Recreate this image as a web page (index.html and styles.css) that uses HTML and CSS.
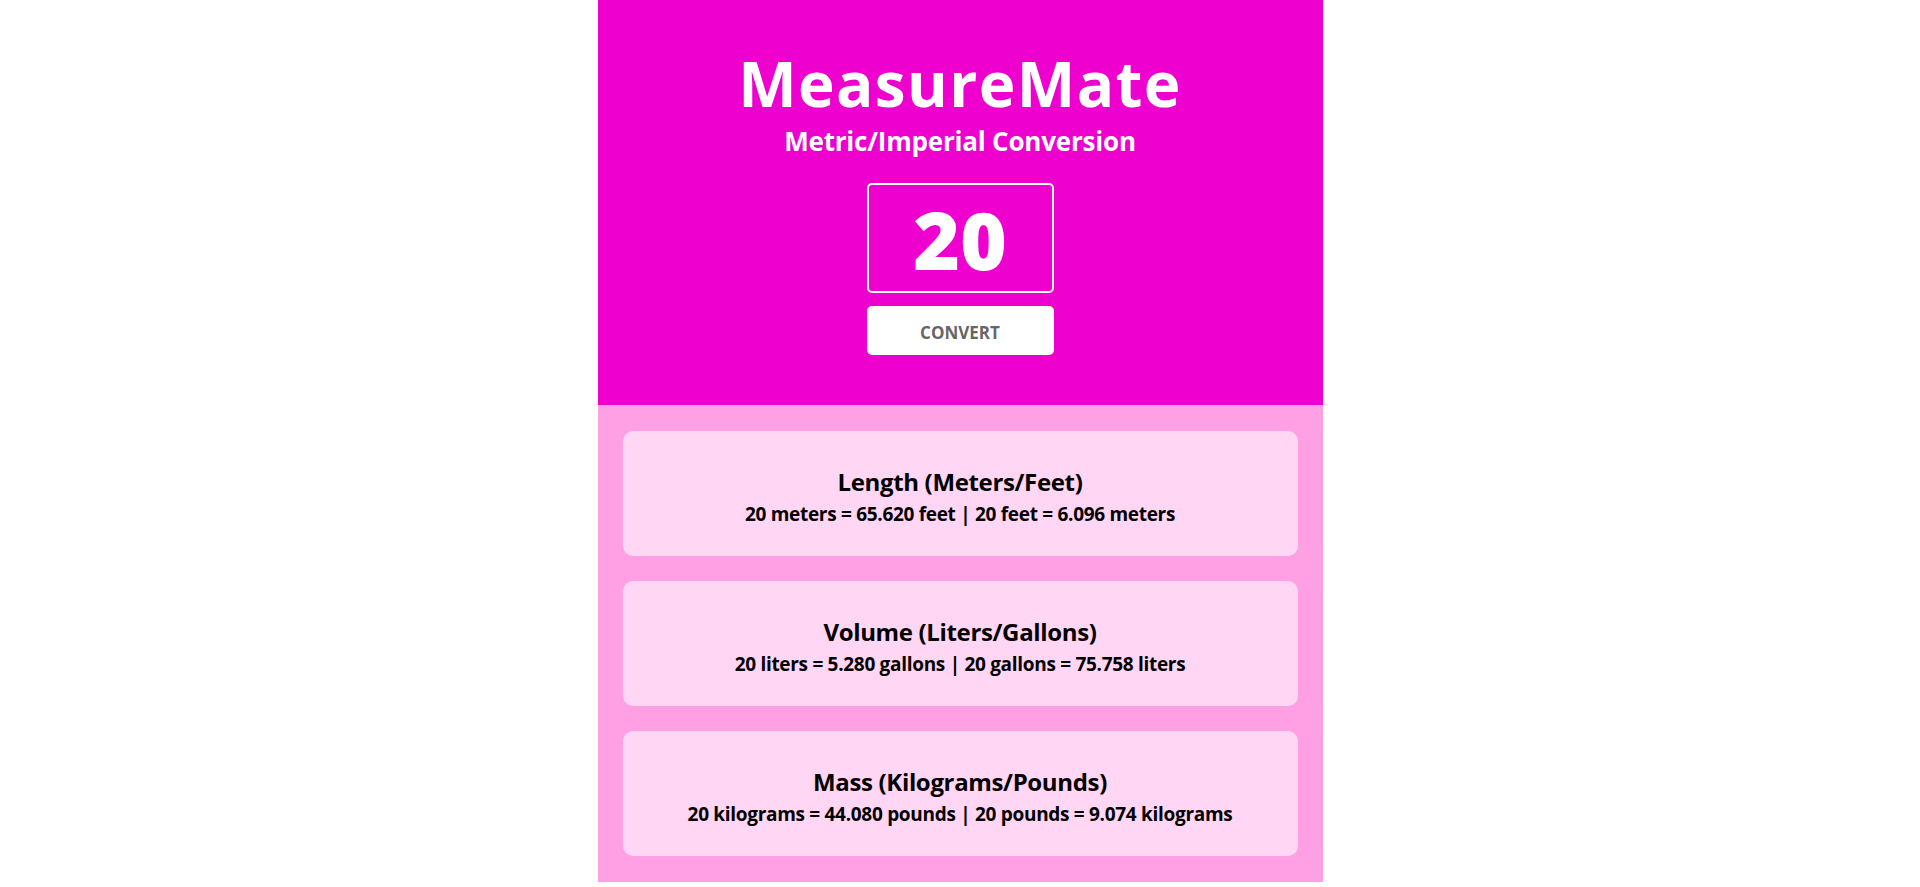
FILE: index.html
```html
<!DOCTYPE html>
<html lang="en">
<head>
<meta charset="utf-8">
<title>MeasureMate</title>
<link rel="stylesheet" href="styles.css">
</head>
<body>
<main class="app">
  <header class="hero">
    <h1 class="title">MeasureMate</h1>
    <h2 class="subtitle">Metric/Imperial Conversion</h2>
    <div class="value-box">20</div>
    <button class="convert-btn" type="button">CONVERT</button>
  </header>
  <section class="results">
    <div class="card">
      <h3 class="card-title">Length (Meters/Feet)</h3>
      <p class="card-text">20 meters = 65.620 feet | 20 feet = 6.096 meters</p>
    </div>
    <div class="card">
      <h3 class="card-title">Volume (Liters/Gallons)</h3>
      <p class="card-text">20 liters = 5.280 gallons | 20 gallons = 75.758 liters</p>
    </div>
    <div class="card">
      <h3 class="card-title">Mass (Kilograms/Pounds)</h3>
      <p class="card-text">20 kilograms = 44.080 pounds | 20 pounds = 9.074 kilograms</p>
    </div>
  </section>
</main>
</body>
</html>
```

FILE: styles.css
```css
* { box-sizing: border-box; }
html, body { margin: 0; padding: 0; background: #ffffff; }
body { font-family: "Open Sans", "Noto Sans", sans-serif; }

.app {
  width: 725px;
  margin: 0 auto;
}

.hero {
  background: #ee00cf;
  height: 405px;
  display: flex;
  flex-direction: column;
  align-items: center;
  padding-top: 41px;
  color: #ffffff;
}

.title {
  margin: 0;
  font-size: 62px;
  font-weight: 700;
  letter-spacing: 1.4px;
  line-height: 84px;
}

.subtitle {
  margin: 0;
  font-size: 26px;
  font-weight: 700;
  letter-spacing: -0.2px;
  line-height: 32px;
}

.value-box {
  margin-top: 26px;
  width: 187px;
  height: 110px;
  border: 2px solid #ffffff;
  border-radius: 5px;
  display: flex;
  align-items: center;
  justify-content: center;
  font-size: 80px;
  font-weight: 800;
}

.convert-btn {
  margin-top: 13px;
  width: 187px;
  height: 49px;
  padding: 3px 0 0;
  background: #ffffff;
  border: none;
  border-radius: 5px;
  font-family: "Open Sans", "Noto Sans", sans-serif;
  font-size: 17px;
  font-weight: 700;
  color: #666666;
}

.results {
  background: #ffa0e4;
  padding: 26px 25px;
  display: flex;
  flex-direction: column;
  gap: 25px;
}

.card {
  background: #ffd6f4;
  border-radius: 10px;
  height: 125px;
  display: flex;
  flex-direction: column;
  align-items: center;
  justify-content: center;
  padding-top: 5px;
}

.card-title {
  margin: 0;
  font-size: 24px;
  font-weight: 700;
  letter-spacing: -0.35px;
  line-height: 30px;
  color: #000000;
}

.card-text {
  margin: 5px 0 0;
  font-size: 19px;
  font-weight: 700;
  letter-spacing: -0.3px;
  line-height: 24px;
  color: #000000;
}
```
